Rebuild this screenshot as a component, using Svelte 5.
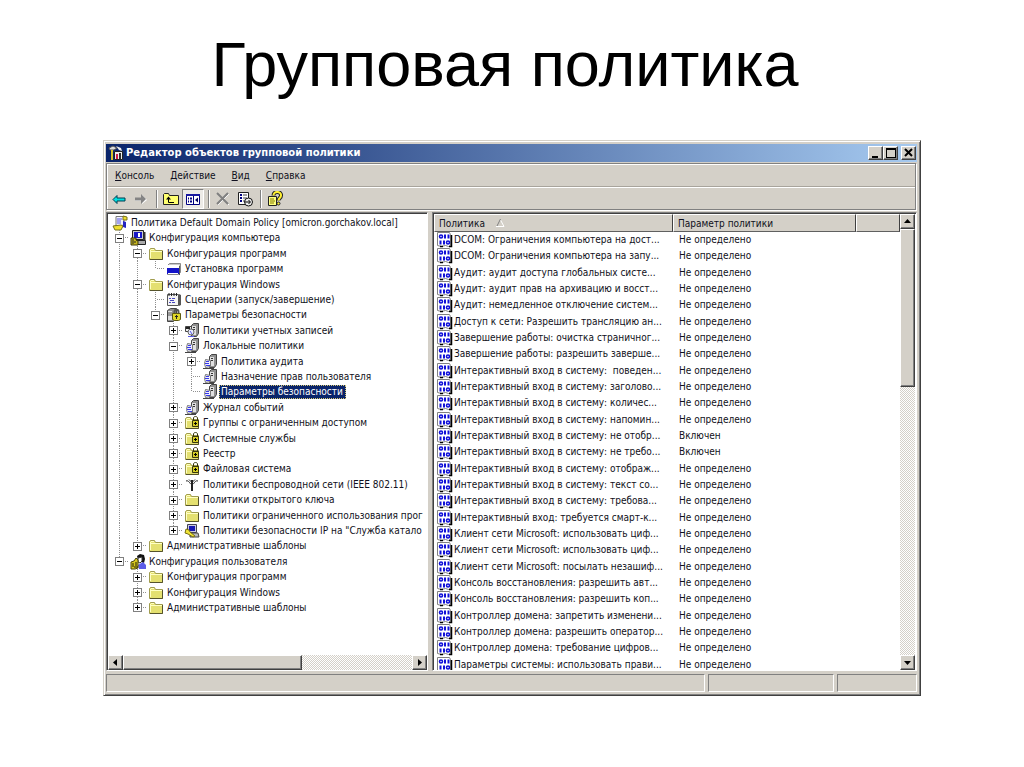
<script>
  const menus = ['Консоль', 'Действие', 'Вид', 'Справка'];

  const tools = [
    { icon: 'back', title: 'Назад' },
    { icon: 'forward', title: 'Вперед' },
    { sep: true },
    { icon: 'up', title: 'На один уровень вверх' },
    { icon: 'panes', title: 'Дерево консоли', pressed: true },
    { sep: true },
    { icon: 'delete', title: 'Удалить' },
    { icon: 'export', title: 'Экспортировать список' },
    { sep: true },
    { icon: 'help', title: 'Справка' }
  ];

  // depth, icon, label, expander state
  const tree = [
    [0, 'scroll', 'Политика Default Domain Policy [omicron.gorchakov.local]', ''],
    [1, 'computer', 'Конфигурация компьютера', '-'],
    [2, 'folder', 'Конфигурация программ', '-'],
    [3, 'install', 'Установка программ', ''],
    [2, 'folder', 'Конфигурация Windows', '-'],
    [3, 'script', 'Сценарии (запуск/завершение)', ''],
    [3, 'security', 'Параметры безопасности', '-'],
    [4, 'account', 'Политики учетных записей', '+'],
    [4, 'server', 'Локальные политики', '-'],
    [5, 'server', 'Политика аудита', '+'],
    [5, 'server', 'Назначение прав пользователя', ''],
    [5, 'server', 'Параметры безопасности', ''],
    [4, 'server', 'Журнал событий', '+'],
    [4, 'locked', 'Группы с ограниченным доступом', '+'],
    [4, 'locked', 'Системные службы', '+'],
    [4, 'locked', 'Реестр', '+'],
    [4, 'locked', 'Файловая система', '+'],
    [4, 'antenna', 'Политики беспроводной сети (IEEE 802.11)', '+'],
    [4, 'folder', 'Политики открытого ключа', '+'],
    [4, 'folder', 'Политики ограниченного использования прог', '+'],
    [4, 'ipsec', 'Политики безопасности IP на "Служба катало', '+'],
    [2, 'folder', 'Административные шаблоны', '+'],
    [1, 'user', 'Конфигурация пользователя', '-'],
    [2, 'folder', 'Конфигурация программ', '+'],
    [2, 'folder', 'Конфигурация Windows', '+'],
    [2, 'folder', 'Административные шаблоны', '+']
  ];
  const selected = 11;

  // is there another node of this depth further down the same branch
  function continues(index, depth) {
    for (let i = index + 1; i < tree.length; i++) {
      if (tree[i][0] < depth) return false;
      if (tree[i][0] === depth) return true;
    }
    return false;
  }

  const nodes = tree.map(([depth, icon, label, sign], index) => {
    const guides = [];
    for (let d = 1; d < depth; d++) guides.push(continues(index, d));
    return { depth, icon, label, sign, guides, last: !continues(index, depth) };
  });

  const policies = [
    ['DCOM: Ограничения компьютера на дост...'],
    ['DCOM: Ограничения компьютера на запу...'],
    ['Аудит: аудит доступа глобальных систе...'],
    ['Аудит: аудит прав на архивацию и восст...'],
    ['Аудит: немедленное отключение систем...'],
    ['Доступ к сети: Разрешить трансляцию ан...'],
    ['Завершение работы: очистка страничног...'],
    ['Завершение работы: разрешить заверше...'],
    ['Интерактивный вход в систему:  поведен...'],
    ['Интерактивный вход в систему: заголово...'],
    ['Интерактивный вход в систему: количес...'],
    ['Интерактивный вход в систему: напомин...'],
    ['Интерактивный вход в систему: не отобр...', 'Включен'],
    ['Интерактивный вход в систему: не требо...', 'Включен'],
    ['Интерактивный вход в систему: отображ...'],
    ['Интерактивный вход в систему: текст со...'],
    ['Интерактивный вход в систему: требова...'],
    ['Интерактивный вход: требуется смарт-к...'],
    ['Клиент сети Microsoft: использовать циф...'],
    ['Клиент сети Microsoft: использовать циф...'],
    ['Клиент сети Microsoft: посылать незашиф...'],
    ['Консоль восстановления: разрешить авт...'],
    ['Консоль восстановления: разрешить коп...'],
    ['Контроллер домена: запретить изменени...'],
    ['Контроллер домена: разрешить оператор...'],
    ['Контроллер домена: требование цифров...'],
    ['Параметры системы: использовать прави...']
  ];
</script>

{#snippet serverBox()}
  <path d="M7.500 2.500l2-2h5v10l-2 3h-5z" fill="#909090" stroke="#444" />
  <path d="M8 3h4v9H8z" fill="#e0e0e0" />
  <path d="M9 4.500h2M9 6.500h2" stroke="#333" />
{/snippet}

{#snippet folderShape()}
  <path d="M1.500 13.500v-10l1-1h4l1 2h7v9z" fill="#e4e070" stroke="#a09c50" />
  <path d="M2.500 12V4M3 3.500h3M3 5.500h11" stroke="#ffffc4" fill="none" />
  <path d="M2 13.500h12.500V5" stroke="#55532c" fill="none" />
{/snippet}

{#snippet icon(name)}
  <svg class="icon" viewBox="0 0 16 16" width="16" height="16" aria-hidden="true">
    {#if name === 'back'}
      <path d="M2 8.500l4-4v2.500h8v3H6v2.500z" fill="#00e0e0" stroke="#003c50" />
    {:else if name === 'forward'}
      <path d="M14 9l-5-5v3H2v3h7v3z" fill="#fff" />
      <path d="M13 8l-5-5v3.500H2v3h6V13z" fill="#848484" />
    {:else if name === 'up'}
      <path d="M.5 13.500v-10l1-1h4l1 2h9v9z" fill="#ffff70" stroke="#222" />
      <path d="M5.500 7v4.500H11" fill="none" stroke="#000" />
      <path d="M3 8.500L5.500 5.500 8 8.500z" fill="#000" />
    {:else if name === 'panes'}
      <path d="M1.500 3.500h13v10h-13z" fill="#fff" stroke="#000080" />
      <path d="M1 3h14v2H1z" fill="#1818a0" />
      <path d="M8.500 5v8" stroke="#000080" />
      <path d="M3 7.500h1M5 7.500h2M3 10.500h1M5 10.500h2" stroke="#000080" stroke-width="2" />
      <path d="M13 6.500v5L10 9z" fill="#000060" />
    {:else if name === 'delete'}
      <path d="M3 3l11 11M14 3L3 14" stroke="#fff" />
      <path d="M2 2l11 11M13 2L2 13" stroke="#808080" stroke-width="2" />
    {:else if name === 'export'}
      <path d="M1.500 1.500h10v12h-10z" fill="#fff" stroke="#222" />
      <path d="M3 4h2M3 7h2M3 10h2" stroke="#000080" stroke-width="2" />
      <path d="M6 4h4M6 7h4M6 10h3" stroke="#444" />
      <circle cx="11.500" cy="11" r="4" fill="#eee" stroke="#111" />
      <path d="M8 11h5M11.500 9l2 2-2 2" fill="none" stroke="#000" />
    {:else if name === 'help'}
      <path d="M1.500 5.500h8v9h-8z" fill="#ffff80" stroke="#222" />
      <path d="M3 8h4M3 10h5M3 12h4" stroke="#807800" />
      <path d="M6.500 4.500c0-5 8-4.500 7.500 0 0 2.500-2.500 2.500-2.500 5" fill="none" stroke="#222" stroke-width="4" />
      <path d="M6.500 4.500c0-5 8-4.500 7.500 0 0 2.500-2.500 2.500-2.500 5" fill="none" stroke="#ffef30" stroke-width="2" />
      <circle cx="11.500" cy="12.500" r="1.500" fill="#ffef30" stroke="#222" />
    {:else if name === 'console'}
      <path d="M1 3l4-2 4 2-3 2H2z" fill="#ddd" stroke="#555" />
      <path d="M8 1l5 2 1 3-3-1z" fill="#eee" />
      <path d="M3 5h2v10H3z" fill="#d8c428" />
      <path d="M6.500 6.500h8v8h-8z" fill="#eee" stroke="#222" />
      <path d="M8 9h2v5H8z" fill="#d02048" />
      <path d="M11 8h2v6h-2z" fill="#303030" />
    {:else if name === 'scroll'}
      <path d="M4 1.500h9l1 2-2 2-1 6-2 2H3l-1-2 2-1z" fill="#f4f4ff" stroke="#777" />
      <path d="M11 1l4 1v3h-4zM1 11l8-1 2 1-2 4H3z" fill="#f0e030" stroke="#77701c" />
      <path d="M5 4h5M5 6h4M5 8h4" stroke="#5050e0" />
      <path d="M11 6l3 1v6l-3-1z" fill="#2525c0" />
    {:else if name === 'computer'}
      <path d="M2.500.5h11v9h-11z" fill="#ccc" stroke="#222" />
      <path d="M4 2h8v6H4z" fill="#1818c8" />
      <path d="M8 3h2v4H8z" fill="#fff" />
      <path d="M5.500 10.500h10v4h-10z" fill="#aaa" stroke="#222" />
      <path d="M1 8h5v2l2 1v4H1z" fill="#c8b820" stroke="#39350a" />
      <path d="M3 9v5M5 11v2" stroke="#222" />
      <path d="M14.500 2v8" stroke="#333" stroke-width="2" />
    {:else if name === 'install'}
      <path d="M1.500 4.500l2-2h11v9l-2 2h-11z" fill="#c8c8c8" stroke="#888" />
      <path d="M1 4h12v3H1z" fill="#fff" />
      <path d="M1 7h12v6H1z" fill="#1414c8" />
      <path d="M2 12.500h10" stroke="#fff" />
      <path d="M13.500 5v9" stroke="#555" />
    {:else if name === 'script'}
      <path d="M1.500 2.500h11v11h-11z" fill="#f4f4f4" stroke="#555" />
      <path d="M13 2v12l2-1V3z" fill="#555" />
      <path d="M3 1v3M5.500 1v3M8 1v3M10.500 1v3" stroke="#222" />
      <path d="M3 6.500h2M6 6.500h3M4 8.500h4M3 10.500h2M6 10.500h3" stroke="#4848c0" />
    {:else if name === 'security'}
      <path d="M1.500 3.500l3-2h6v10l-3 3h-6z" fill="#909090" stroke="#444" />
      <path d="M2 4h4v9H2z" fill="#ddd" />
      <path d="M2 6h4M2 8h4" stroke="#555" />
      <path d="M8.500 7V5c0-3 4-3 4 0v2" fill="none" stroke="#555" stroke-width="2" />
      <path d="M6.500 6.500h8v6l-2 1h-4l-2-1z" fill="#e0d828" stroke="#5f5a10" />
      <path d="M10.500 8v4M9 9.500h3" stroke="#222" />
    {:else if name === 'account'}
      <path d="M1.500 3.500h6v5h-6z" fill="#eee" stroke="#444" />
      <path d="M2 5h4" stroke="#222" stroke-width="2" />
      {@render serverBox()}
      <circle cx="7" cy="9" r="3" fill="#e8ecff" stroke="#666" />
      <path d="M4 13.500h6M6 8l2 3" stroke="#5757e8" />
    {:else if name === 'server'}
      {@render serverBox()}
      <path d="M3.500 5.500l5 1v6l-5 1-1-4z" fill="#eef0ff" stroke="#777" />
      <path d="M3 9.500h4M4 7.500h3M4 11.500h4" stroke="#3838e8" />
      <path d="M1 14.500h11" stroke="#444" />
    {:else if name === 'folder'}
      {@render folderShape()}
    {:else if name === 'locked'}
      {@render folderShape()}
      <path d="M9.500 6V3c0-2 4-2 4 0v3" fill="none" stroke="#39370d" />
      <path d="M8.500 5.500h6v6h-6z" fill="#d4cc24" stroke="#39370d" />
      <path d="M11.500 7v3M10 8.500h3" stroke="#000" />
    {:else if name === 'antenna'}
      <path d="M2 4c3-1 3 2 6 4M14 4c-3-1-3 2-6 4M5 2.500l3 3 3-3" fill="none" stroke="#222" />
      <path d="M8 3v11" stroke="#222" stroke-width="2" />
    {:else if name === 'ipsec'}
      <path d="M3.500 1.500h9v8h-9z" fill="#ccd" stroke="#445" />
      <path d="M5 3h6v5H5z" fill="#1717b4" />
      <path d="M6 10h8l1 4H6z" fill="#bbb" stroke="#444" />
      <path d="M2 6l3 1 1 2 5 4-2 1-5-3-3-1z" fill="#f0e438" stroke="#786f10" />
    {:else if name === 'user'}
      <path d="M7 2l3-2 4 1 1 4-1 4-3-1-1-4-2 2z" fill="#111" />
      <path d="M8 4l4-1v4l-2 2-2-1z" fill="#fff" stroke="#333" />
      <path d="M8 11l5-3 3 3v4H9z" fill="#5c5ce8" />
      <path d="M1 8l3-1 2-3 2 2v8l-3 1H1z" fill="#d8c820" stroke="#4c470b" />
      <path d="M3 9v4M6 8v4M4 13h4" stroke="#1f1d05" />
    {:else if name === 'policy'}
      <path d="M.5.500h12l1 2v11l-2 1-3-1-4 1-4-1z" fill="#fff" stroke="#808080" />
      <path d="M14.500 3v11.500H12M3 14.500h3" fill="none" stroke="#000" stroke-width="1.500" />
      <ellipse cx="4" cy="4.500" rx="1.500" ry="1.500" fill="none" stroke="#1010d8" stroke-width="1.600" />
      <path d="M8 2.500V6.500M11.500 2.500V6.500M3.500 8.500v4M7 8.500v4" stroke="#1010d8" stroke-width="2" />
      <ellipse cx="11" cy="10.500" rx="1.500" ry="1.500" fill="none" stroke="#1010d8" stroke-width="1.600" />
    {/if}
  </svg>
{/snippet}

{#snippet arrow(dir)}
  <svg viewBox="0 0 9 9" width="9" height="9" aria-hidden="true">
    {#if dir === 'left'}<path d="M6 1v7L2 4.500z" />
    {:else if dir === 'right'}<path d="M3 1v7l4-3.500z" />
    {:else if dir === 'up'}<path d="M1 6h7L4.500 2z" />
    {:else}<path d="M1 3h7L4.500 7z" />{/if}
  </svg>
{/snippet}

<main class="slide">
  <h1>Групповая политика</h1>

  <section class="window">
    <header class="titlebar">
      {@render icon('console')}
      <span class="caption">Редактор объектов групповой политики</span>
      <button class="box" aria-label="Свернуть">
        <svg viewBox="0 0 10 10" width="10" height="10"><path d="M1 8h6v2H1z" /></svg>
      </button>
      <button class="box" aria-label="Развернуть">
        <svg viewBox="0 0 10 10" width="10" height="10"><path d="M0 0h10v10H0zM1 2v7h8V2z" fill-rule="evenodd" /></svg>
      </button>
      <button class="box close" aria-label="Закрыть">
        <svg viewBox="0 0 10 10" width="10" height="10"><path d="M1 1l7 7M8 1L1 8" stroke="#000" stroke-width="2" /></svg>
      </button>
    </header>

    <div class="bars">
      <nav class="menu">
        {#each menus as item}
          <button><u>{item[0]}</u>{item.slice(1)}</button>
        {/each}
      </nav>
      <div class="toolbar">
        {#each tools as tool}
          {#if tool.sep}
            <span class="sep"></span>
          {:else}
            <button class:pressed={tool.pressed} aria-label={tool.title}>{@render icon(tool.icon)}</button>
          {/if}
        {/each}
      </div>
    </div>

    <div class="panes">
      <div class="pane tree-pane">
        <ul class="tree">
          {#each nodes as node, i}
            <li>
              {#each node.guides as on}
                <span class="cell" class:line={on}></span>
              {/each}
              {#if node.depth > 0}
                <span class="cell branch" class:last={node.last}>
                  {#if node.sign}
                    <button class="expander" class:plus={node.sign === '+'} aria-label={node.label}></button>
                  {/if}
                </span>
              {/if}
              {@render icon(node.icon)}
              <span class="label" class:selected={i === selected}>{node.label}</span>
            </li>
          {/each}
        </ul>
        <div class="scroll horizontal">
          <button class="box" aria-label="Влево">{@render arrow('left')}</button>
          <div class="thumb"></div>
          <button class="box" aria-label="Вправо">{@render arrow('right')}</button>
        </div>
      </div>

      <div class="pane list-pane">
        <div class="list">
          <table>
            <colgroup><col class="c1" /><col class="c2" /><col /></colgroup>
            <thead>
              <tr>
                <th>Политика
                  <svg class="sort" viewBox="0 0 9 8" width="9" height="8" aria-hidden="true">
                    <path d="M4.500 1L8 7.500H0" fill="none" stroke="#fff" />
                    <path d="M4.500 0L1 7" fill="none" stroke="#808080" />
                  </svg>
                </th>
                <th>Параметр политики</th>
                <th></th>
              </tr>
            </thead>
            <tbody>
              {#each policies as [name, value = 'Не определено']}
                <tr>
                  <td><div class="policy">{@render icon('policy')}<span>{name}</span></div></td>
                  <td>{value}</td>
                  <td></td>
                </tr>
              {/each}
            </tbody>
          </table>
        </div>
        <div class="scroll vertical">
          <button class="box" aria-label="Вверх">{@render arrow('up')}</button>
          <div class="thumb"></div>
          <button class="box" aria-label="Вниз">{@render arrow('down')}</button>
        </div>
      </div>
    </div>

    <footer class="status">
      <div></div>
      <div></div>
      <div></div>
    </footer>
  </section>
</main>

<style>
  :global(body) {
    margin: 0;
    background: #fff;
  }

  .slide {
    padding: 28px 103px 0;
  }

  h1 {
    margin: 0 0 40px;
    padding-right: 14px;
    font: 400 63px/72px "Liberation Sans", Arial, sans-serif;
    text-align: center;
    color: #000;
  }

  .window {
    box-sizing: border-box;
    padding: 2px 3px 2px 2px;
    border: 1px solid;
    border-color: #d4d0c8 #404040 #404040 #d4d0c8;
    box-shadow: inset 1px 1px #fff, inset -1px -1px #808080;
    background: #d4d0c8;
    font: 10px/14px "DejaVu Sans Condensed", Tahoma, sans-serif;
    color: #101020;
  }

  button {
    box-sizing: border-box;
    margin: 0;
    padding: 0;
    border: 0;
    background: none;
    font: inherit;
    color: inherit;
  }

  .icon {
    flex: none;
    display: block;
  }

  .box {
    flex: none;
    display: flex;
    align-items: center;
    justify-content: center;
    width: 15px;
    height: 15px;
    background: #d4d0c8;
    border: 1px solid;
    border-color: #fff #404040 #404040 #fff;
    box-shadow: inset -1px -1px #808080;
  }

  .titlebar {
    display: flex;
    align-items: center;
    height: 18px;
    margin: 1px 0 0;
    padding: 0 1px 0 2px;
    background: linear-gradient(90deg, #0a246a, #a6caf0);
    color: #fff;
  }

  .caption {
    flex: 1;
    padding-left: 2px;
    font-family: "DejaVu Sans", Verdana, sans-serif;
    font-weight: 700;
    white-space: nowrap;
  }

  .titlebar .box {
    height: 14px;
  }

  .titlebar .close {
    margin-left: 3px;
  }

  .bars {
    margin: 1px 1px 2px 0;
    border: 1px solid #808080;
    box-shadow: 1px 1px #fff;
  }

  .menu,
  .toolbar {
    display: flex;
    align-items: center;
    box-sizing: border-box;
    border-top: 1px solid #fff;
    border-left: 1px solid #fff;
  }

  .menu {
    gap: 1px;
    height: 23px;
    border-bottom: 1px solid #a8a49c;
  }

  .menu button {
    padding: 0 8px 0 7px;
  }

  .toolbar {
    height: 22px;
  }

  .toolbar button {
    display: flex;
    align-items: center;
    justify-content: center;
    width: 22px;
    height: 20px;
  }

  .toolbar .pressed {
    background: #eceae6;
    border: 1px solid;
    border-color: #808080 #fff #fff #808080;
  }

  .sep {
    width: 3px;
    height: 18px;
    margin-right: 3px;
    border-right: 1px solid #808080;
    box-shadow: 1px 0 #fff;
    padding-right: 1px;
  }

  .panes {
    display: grid;
    grid-template-columns: 322px minmax(0, 1fr);
    gap: 4px;
    height: 459px;
  }

  .pane {
    display: flex;
    min-width: 0;
    min-height: 0;
    overflow: hidden;
    background: #fff;
    border: 1px solid;
    border-color: #808080 #fff #fff #808080;
    box-shadow: inset 1px 1px #404040;
    padding: 1px 0 0 1px;
  }

  .tree-pane {
    flex-direction: column;
  }

  .tree {
    flex: 1;
    margin: 0;
    padding: 1px 0 0 3px;
    list-style: none;
    overflow: hidden;
    white-space: nowrap;
  }

  .tree li {
    display: flex;
    align-items: center;
    height: 15px;
  }

  .tree li:nth-child(5n + 2),
  .tree li:nth-child(5n + 4) {
    height: 16px;
  }

  .tree .icon {
    margin-left: 1px;
  }

  .cell {
    flex: none;
    display: flex;
    align-items: center;
    align-self: stretch;
    width: 18px;
  }

  .line,
  .branch {
    background: repeating-linear-gradient(#909090 0 1px, #fff 1px 2px) 8px 0 / 1px 100% no-repeat;
  }

  .branch {
    background:
      repeating-linear-gradient(#909090 0 1px, #fff 1px 2px) 8px 0 / 1px 100% no-repeat,
      repeating-linear-gradient(90deg, #909090 0 1px, #fff 1px 2px) 8px 7px / 10px 1px no-repeat;
  }

  .branch.last {
    background-size: 1px 8px, 10px 1px;
  }

  .expander {
    width: 9px;
    height: 9px;
    margin-left: 4px;
    border: 1px solid #808080;
    background: linear-gradient(#000, #000) 1px 3px / 5px 1px no-repeat #fff;
  }

  .expander.plus {
    background:
      linear-gradient(#000, #000) 1px 3px / 5px 1px no-repeat,
      linear-gradient(#000, #000) 3px 1px / 1px 5px no-repeat,
      #fff;
  }

  .label {
    margin-left: 1px;
    padding: 0 3px 0 2px;
  }

  .selected {
    outline: 1px dotted #d8c870;
    outline-offset: -1px;
    background: #0a246a;
    color: #fff;
  }

  .list-pane {
    padding-right: 1px;
  }

  .list {
    flex: 1;
    min-width: 0;
    overflow: hidden;
  }

  table {
    width: 100%;
    table-layout: fixed;
    border-collapse: separate;
    border-spacing: 0;
    white-space: nowrap;
  }

  .c1 {
    width: 239px;
  }

  .c2 {
    width: 183px;
  }

  th {
    box-sizing: border-box;
    height: 18px;
    padding: 1px 5px 0 4px;
    border: 1px solid;
    border-color: #fff #404040 #606060 #fff;
    background: #d4d0c8;
    font-weight: 400;
    text-align: left;
  }

  .sort {
    margin-left: 8px;
  }

  td {
    height: 16px;
    padding: 0 6px;
  }

  tr:nth-child(3n) td {
    height: 17px;
  }

  td:first-child {
    padding: 0 0 0 3px;
  }

  .policy {
    display: flex;
    align-items: center;
    gap: 1px;
    height: 16px;
    white-space: pre;
  }

  .scroll {
    flex: none;
    display: flex;
    background: repeating-conic-gradient(#fff 0 25%, #d4d0c8 0 50%) 0 0 / 2px 2px;
  }

  .scroll .thumb {
    background: #d4d0c8;
    border: 1px solid;
    border-color: #fff #404040 #404040 #fff;
    box-shadow: inset -1px -1px #808080;
    box-sizing: border-box;
  }

  .scroll .box:last-child {
    margin: auto 0 0 auto;
  }

  .horizontal .thumb {
    width: 56%;
  }

  .vertical {
    flex-direction: column;
  }

  .vertical .thumb {
    height: 158px;
  }

  .status {
    display: grid;
    grid-template-columns: 1fr 126px 80px;
    gap: 3px;
    margin-top: 3px;
    padding-bottom: 1px;
  }

  .status div {
    height: 16px;
    border: 1px solid;
    border-color: #808080 #fff #fff #808080;
  }
</style>
